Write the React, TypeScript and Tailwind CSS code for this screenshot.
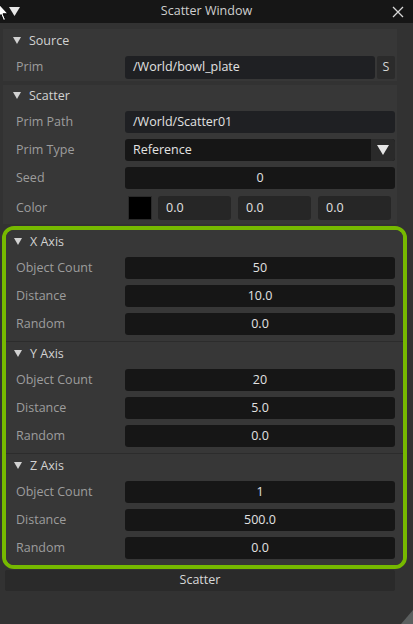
import React from 'react';

const FONT = "font-['Open_Sans','Noto_Sans',sans-serif]";

function Tri({ className = '' }: { className?: string }) {
  return (
    <svg width="8" height="7" viewBox="0 0 8 7" className={className}>
      <path d="M0 0 L8 0 L4 7 Z" fill="currentColor" />
    </svg>
  );
}

function Header({ title, pl }: { title: string; pl: string }) {
  return (
    <div className={`flex items-center h-[18px] ${pl} text-[#d2d2d2]`}>
      <Tri className="mr-[8px] mt-[-2px]" />
      <span>{title}</span>
    </div>
  );
}

function Label({ text, w }: { text: string; w: string }) {
  return <div className={`${w} shrink-0 text-[#9d9d9d]`}>{text}</div>;
}

function NumRow({ label, value, lw }: { label: string; value: string; lw: string }) {
  return (
    <div className="flex items-center h-[22px]">
      <Label text={label} w={lw} />
      <div className="w-[270px] h-[22px] rounded-[3px] bg-[#161616] text-[#e2e2e2] flex items-center justify-center">
        {value}
      </div>
    </div>
  );
}

function AxisSection({ axis, count, distance, last }: { axis: string; count: string; distance: string; last?: boolean }) {
  return (
    <div className={`pt-[3px] pb-[6px] bg-[#373737] ${last ? '' : 'border-b border-[#2c2c2c]'}`}>
      <Header title={`${axis} Axis`} pl="pl-[8px]" />
      <div className="mt-[6px] flex flex-col gap-[6px] pl-[10px]">
        <NumRow label="Object Count" value={count} lw="w-[109px]" />
        <NumRow label="Distance" value={distance} lw="w-[109px]" />
        <NumRow label="Random" value="0.0" lw="w-[109px]" />
      </div>
    </div>
  );
}

export default function App() {
  return (
    <div className={`relative w-[413px] h-[624px] bg-[#323232] text-[12.5px] leading-none ${FONT} overflow-hidden`}>
      {/* title bar */}
      <div className="relative h-[23px] bg-[#161616] flex items-center justify-center text-[#cfcfcf]">
        <svg width="11" height="9" viewBox="0 0 11 9" className="absolute left-[9px] top-[7px]">
          <path d="M0 0 L11 0 L5.5 9 Z" fill="#e8e8e8" />
        </svg>
        <span>Scatter Window</span>
        <svg width="12" height="12" viewBox="0 0 12 12" className="absolute left-[392px] top-[6px]">
          <path d="M1 1 L11 11 M11 1 L1 11" stroke="#d8d8d8" strokeWidth="1.3" />
        </svg>
      </div>

      <div className="pl-[3px] pt-[6px] w-[397px] flex flex-col">
        {/* Source */}
        <div className="bg-[#373737] pt-[3px] pb-[3px]">
          <Header title="Source" pl="pl-[10px]" />
          <div className="mt-[6px] flex items-center h-[22px] pl-[13px]">
            <Label text="Prim" w="w-[109px]" />
            <div className="w-[250px] h-[23px] rounded-[3px] bg-[#1f2023] text-[#e2e2e2] flex items-center pl-[8px]">
              /World/bowl_plate
            </div>
            <div className="ml-[2px] w-[18px] h-[23px] rounded-[2px] bg-[#2b2b2b] text-[#d6d6d6] flex items-center justify-center">
              S
            </div>
          </div>
        </div>

        {/* Scatter */}
        <div className="mt-[4px] bg-[#373737] pt-[2px] pb-[4px]">
          <Header title="Scatter" pl="pl-[10px]" />
          <div className="mt-[6px] flex flex-col gap-[6px] pl-[13px]">
            <div className="flex items-center h-[22px]">
              <Label text="Prim Path" w="w-[109px]" />
              <div className="w-[270px] h-[22px] rounded-[3px] bg-[#1f2023] text-[#e2e2e2] flex items-center pl-[8px]">
                /World/Scatter01
              </div>
            </div>
            <div className="flex items-center h-[22px]">
              <Label text="Prim Type" w="w-[109px]" />
              <div className="w-[270px] h-[22px] rounded-[3px] bg-[#161616] text-[#e2e2e2] flex items-center overflow-hidden">
                <span className="flex-1 pl-[8px]">Reference</span>
                <div className="w-[24px] h-full bg-[#2a2a2a] flex items-center justify-center text-[#e6e6e6]">
                  <svg width="12" height="10" viewBox="0 0 12 10">
                    <path d="M0 0 L12 0 L6 10 Z" fill="currentColor" />
                  </svg>
                </div>
              </div>
            </div>
            <NumRow label="Seed" value="0" lw="w-[109px]" />
            <div className="flex items-center h-[24px] mt-[1px]">
              <Label text="Color" w="w-[112px]" />
              <div className="w-[24px] h-[24px] bg-black border border-[#2a2a2a]" />
              <div className="ml-[6px] w-[73px] h-[24px] rounded-[3px] bg-[#262626] text-[#e2e2e2] flex items-center pl-[8px]">0.0</div>
              <div className="ml-[7px] w-[73px] h-[24px] rounded-[3px] bg-[#262626] text-[#e2e2e2] flex items-center pl-[8px]">0.0</div>
              <div className="ml-[7px] w-[73px] h-[24px] rounded-[3px] bg-[#262626] text-[#e2e2e2] flex items-center pl-[8px]">0.0</div>
            </div>
          </div>
        </div>

        {/* Axes highlighted */}
        <div className="mt-[2px] ml-[-1px] w-[405px] border-4 border-[#76b900] rounded-[12px] overflow-hidden">
          <AxisSection axis="X" count="50" distance="10.0" />
          <AxisSection axis="Y" count="20" distance="5.0" />
          <AxisSection axis="Z" count="1" distance="500.0" last />
        </div>

        <div className="mt-[1px] ml-[2px] w-[390px] h-[21px] rounded-[2px] bg-[#2a2a2a] text-[#d8d8d8] flex items-center justify-center">
          Scatter
        </div>
      </div>

      {/* resize grip */}
      <svg width="12" height="14" viewBox="0 0 12 14" className="absolute right-0 bottom-0">
        <path d="M12 0 L12 14 L0 14 Z" fill="#5b5f5f" />
      </svg>

      {/* mouse cursor */}
      <svg width="12" height="22" viewBox="0 0 12 22" className="absolute left-[-3px] top-[2px]">
        <path d="M0.5 0.5 L0.5 16 L4 12.5 L6.5 18.5 L8.5 17.5 L6 11.8 L11 11.8 Z" fill="#ffffff" stroke="#000" strokeWidth="1" />
      </svg>
    </div>
  );
}
